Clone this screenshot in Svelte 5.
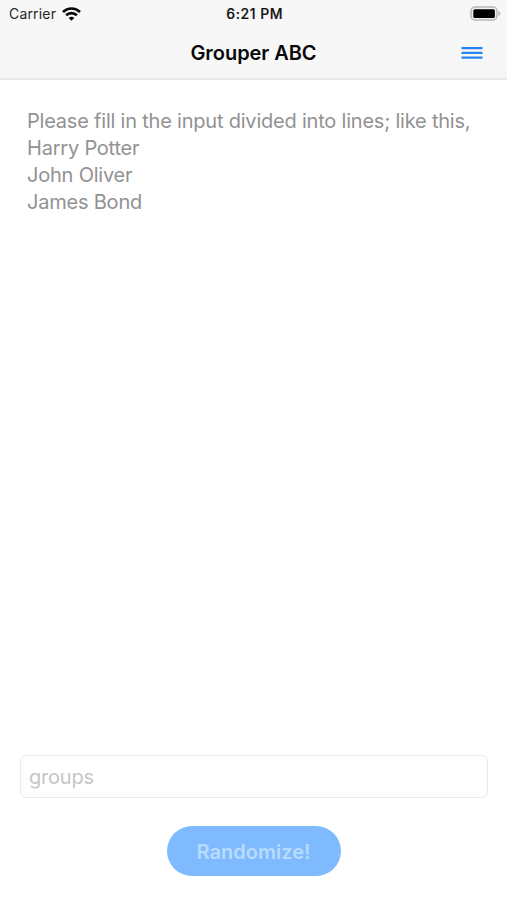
<script>
  let names = $state('');
  let groups = $state('');
  const hint = 'Please fill in the input divided into lines; like this,\nHarry Potter\nJohn Oliver\nJames Bond';
</script>

<div class="screen">
  <header>
    <div class="status">
      <div class="carrier">
        <span>Carrier</span>
        <svg width="19" height="14" viewBox="0 0 19 14" fill="none" stroke="#0a0a0a" stroke-width="2.6">
          <path d="M1 5C5.700.4 13.300.4 18 5" />
          <path d="M4.100 8.300c3-2.900 7.800-2.900 10.800 0" />
          <path d="M9.500 13.700 6.700 10.900c1.600-1.500 4-1.500 5.600 0z" fill="#0a0a0a" stroke="none" />
        </svg>
      </div>
      <span class="time">6:21 PM</span>
      <svg class="battery" width="31" height="15" viewBox="0 0 31 15">
        <rect x="1" y="1" width="26" height="13" rx="4" fill="#f0f0f0" stroke="#b8b8b8" stroke-width="1.500" />
        <rect x="3.300" y="3.200" width="21.600" height="8.700" rx="1.500" fill="#000" />
        <path d="M28.500 5v5c2.500-.7 2.500-4.300 0-5z" fill="#b2b2b2" />
      </svg>
    </div>
    <div class="nav">
      <h1>Grouper ABC</h1>
      <button class="menu" aria-label="Menu">
        <svg width="22" height="14" viewBox="0 0 22 14" stroke="#2484ee" stroke-width="2.300">
          <path d="M.5 2.200h21M.5 6.900h21M.5 11.700h21" />
        </svg>
      </button>
    </div>
  </header>
  <textarea class="names" placeholder={hint} bind:value={names}></textarea>
  <input class="groups" placeholder="groups" bind:value={groups} />
  <button class="randomize">Randomize!</button>
</div>

<style>
  .screen {
    height: 900px;
    display: flex;
    flex-direction: column;
    background: #fff;
    font-family: Inter, "Liberation Sans", sans-serif;
    overflow: hidden;
  }
  header {
    height: 80px;
    box-sizing: border-box;
    background: #f7f7f7;
    border-bottom: 2px solid #e8e8e8;
    flex: none;
  }
  .status {
    height: 27px;
    display: grid;
    grid-template-columns: 1fr auto 1fr;
    align-items: center;
    padding: 0 6px 0 8px;
    font-size: 14px;
    line-height: 27px;
    color: #262626;
  }
  .carrier {
    display: flex;
    align-items: center;
    gap: 6px;
    padding-left: 1px;
    letter-spacing: 0.18px;
  }
  .time {
    font-weight: 500;
    -webkit-text-stroke: 0.2px #111;
    color: #111;
    letter-spacing: 0.55px;
    margin-right: -0.5px;
  }
  .battery {
    justify-self: end;
  }
  .nav {
    height: 51px;
    display: grid;
    grid-template-columns: 1fr auto 1fr;
    align-items: center;
    padding: 0 24px;
  }
  h1 {
    grid-column: 2;
    margin: 0;
    font-size: 20px;
    line-height: 24px;
    font-weight: 600;
    letter-spacing: -0.05px;
    color: #080808;
  }
  button {
    border: 0;
    padding: 0;
    font-family: inherit;
  }
  .menu {
    justify-self: end;
    background: none;
    line-height: 0;
  }
  textarea,
  input {
    box-sizing: border-box;
    font-family: inherit;
    font-size: 20px;
    outline: none;
    background: #fff;
    letter-spacing: -0.21px;
  }
  .names {
    flex: 1;
    margin: 28px 20px 19px;
    padding: 0 0 0 7px;
    border: 0;
    resize: none;
    overflow: hidden;
    line-height: 27px;
  }
  .names::placeholder {
    color: #929292;
    opacity: 1;
  }
  .groups {
    height: 43px;
    flex: none;
    margin: 0 19px 0 20px;
    padding: 0 8px;
    border: 1px solid #ebebeb;
    border-radius: 6px;
  }
  .groups::placeholder {
    color: #c5c5c7;
    opacity: 1;
  }
  .randomize {
    width: 174px;
    height: 50px;
    flex: none;
    align-self: center;
    margin: 28px 0 24px;
    padding-top: 1px;
    border-radius: 25px;
    background: #7fbaff;
    color: #b8dcff;
    font-size: 20px;
    font-weight: 600;
  }
</style>
